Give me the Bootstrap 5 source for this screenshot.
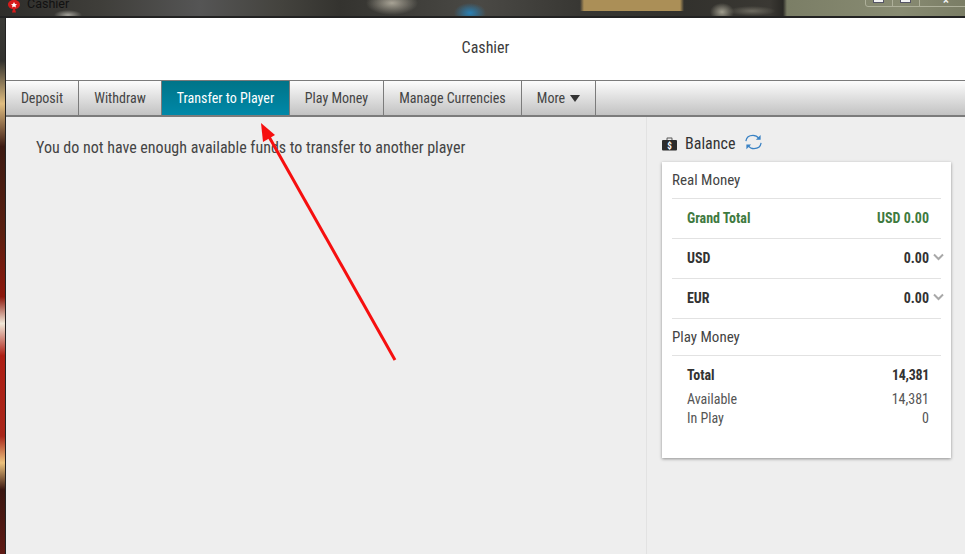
<!DOCTYPE html>
<html lang="en">
<head>
<meta charset="utf-8">
<title>Cashier</title>
<link href="https://cdn.jsdelivr.net/npm/bootstrap@5.3.0/dist/css/bootstrap.min.css" rel="stylesheet">
<style>
html,body{height:100%;}
body{width:965px;height:554px;overflow:hidden;position:relative;background:#eee;font-family:Roboto,"Liberation Sans",sans-serif;font-stretch:75%;color:#333;}
.titlebar{height:18px;flex:none;position:relative;overflow:hidden;border-bottom:2px solid;border-image:linear-gradient(#bdbdb0 50%,#222 50%) 1;background:
 radial-gradient(ellipse 14px 5px at 68px 15px,#a3a199,transparent),
 radial-gradient(ellipse 26px 12px at 392px 3px,#a8a395,transparent),
 radial-gradient(ellipse 16px 10px at 470px 13px,#2a80b4,transparent),
 radial-gradient(ellipse 12px 9px at 722px 12px,#a09d8e,transparent),
 radial-gradient(ellipse 24px 5px at 752px 11px,#6d6a60,transparent),
 linear-gradient(90deg,transparent 580px,#ab8f57 584px,#ab8f57 680px,transparent 684px) 0 0/100% 11px no-repeat,
 linear-gradient(90deg,#2e2d2a 0,#3f3e3a 100px,#555 200px,#44433e 280px,#34332f 340px,#4a4945 480px,#383733 580px,#32312d 684px,#3a3833 770px,#2a2925 783px,#7b7e66 787px,#888b72 900px,#7a7d65 965px);}
.wintitle{font-size:12.5px;line-height:14px;margin-top:-5px;color:#111;gap:6px;padding-left:7px;font-stretch:100%;}
.wintitle svg{margin-top:4px;}
.winbtns{position:absolute;left:865px;top:-6px;height:13px;width:110px;border:1px solid #aeb09a;border-radius:3px;}
.winbtns i{position:absolute;top:2px;width:11px;height:6px;background:#f4f4f4;border:1px solid #556;}
.winbtns i:nth-child(1){left:7px}.winbtns i:nth-child(2){left:34px}
.winbtns b{position:absolute;top:0;bottom:0;width:1px;background:#aeb09a;}
.winbtns b:nth-of-type(1){left:26px}.winbtns b:nth-of-type(2){left:53px}
.winbtns em{position:absolute;left:74px;top:0;width:12px;height:12px;font-style:normal;font-size:11px;line-height:12px;color:#f4f4f4;font-weight:700;text-align:center;font-stretch:100%;}
.sidestrip{width:6px;flex:none;border-right:1px solid #222;background:linear-gradient(#3a3a36 0,#33322e 8%,#e0bd80 16%,#3c1a12 24%,#5a1f10 40%,#8d170c 52%,#f1e8d8 57%,#ad1e14 63%,#a9261a 78%,#ecc27c 83%,#3a1610 88%,#5f1a14 100%);}
.headerzone{height:62px;flex:none;background:#fff;font-size:16px;color:#3c3c3c;padding-bottom:2px;}
.tabstrip{height:37px;flex:none;border-top:1px solid #7b7b7b;border-bottom:2px solid #7b7b7b;background:linear-gradient(#fcfcfc,#c2c2c2);}
.tabitem{display:flex;align-items:center;justify-content:center;height:100%;border-right:1px solid #7b7b7b;font-size:14px;color:#444;text-decoration:none;}
.tabitem.on{background:linear-gradient(#007488,#0088a8);color:#fff;}
.w1{width:73px}.w2{width:83px}.w3{width:128px}.w4{width:94px}.w5{width:138px}.w6{width:74px}
.caretdown{width:0;height:0;border-left:5.5px solid transparent;border-right:5.5px solid transparent;border-top:7px solid #333;margin-left:5px;}
.mainarea{background:#eee;min-height:0;}
.leftpane{width:640px;flex:none;padding:21px 0 0 30px;font-size:16px;line-height:20px;color:#444;}
.rightpane{width:319px;flex:none;border-left:1px solid #e2e2e2;padding:11px 14px 0 15px;}
.balhead{height:34px;padding-bottom:3px;font-size:16px;color:#333;gap:8px;}
.refreshicon{margin:0 0 4px 1px;}
.cardbox{background:#fff;box-shadow:0 1px 3px rgba(0,0,0,.4);padding:0 10px;height:296px;}
.secttl{font-size:15px;color:#444;}
.s1{height:37px;border-bottom:1px solid #e2e2e2;padding-top:8px;line-height:20px;}
.s2{height:37px;border-bottom:1px solid #e2e2e2;padding-top:8px;line-height:20px;}
.rowline{height:40px;border-bottom:1px solid #e2e2e2;padding:0 12px 0 15px;font-size:14px;font-weight:700;position:relative;color:#333;}
.rowline.gtot{color:#3f7a3f;}
.chev{position:absolute;right:-3px;top:14px;}
.minirow{padding:0 12px 0 15px;font-size:14px;color:#555;line-height:19px;}
.minirow.bold{font-weight:700;color:#333;padding-top:10px;margin-bottom:5px;}
.numtight{letter-spacing:-.3px;}
.redarrow{position:absolute;left:0;top:0;pointer-events:none;}
</style>
</head>
<body class="d-flex flex-column">
<div class="titlebar">
  <div class="wintitle d-flex align-items-center">
    <svg width="14" height="14" viewBox="0 0 14 14"><path d="M7 1C3.500 1 1 3 1 5.500S3.500 10 6 10L5 13.500H9L8 10C10.500 10 13 8 13 5.500S10.500 1 7 1Z" fill="#d61a1a"/><path d="M7 3l1 2 2 .2-1.500 1.400.4 2L7 7.600 5.100 8.600l.4-2L4 5.200 6 5z" fill="#fff"/></svg>
    <span>Cashier</span>
  </div>
  <div class="winbtns"><i></i><i></i><b></b><b></b><em>×</em></div>
</div>
<div class="d-flex flex-grow-1" style="min-height:0">
  <div class="sidestrip"></div>
  <div class="d-flex flex-column flex-grow-1" style="min-width:0">
    <div class="headerzone d-flex align-items-center justify-content-center">Cashier</div>
    <nav class="tabstrip d-flex">
      <a class="tabitem w1" href="#">Deposit</a>
      <a class="tabitem w2" href="#">Withdraw</a>
      <a class="tabitem w3 on" href="#">Transfer to Player</a>
      <a class="tabitem w4" href="#">Play Money</a>
      <a class="tabitem w5" href="#">Manage Currencies</a>
      <a class="tabitem w6" href="#">More<span class="caretdown"></span></a>
    </nav>
    <div class="mainarea d-flex flex-grow-1">
      <div class="leftpane">You do not have enough available funds to transfer to another player</div>
      <div class="rightpane">
        <div class="balhead d-flex align-items-center">
          <svg width="15" height="14" viewBox="0 0 15 14"><path d="M4.500 3V1.500C4.500 1 5 .5 5.500 .5H9.500C10 .5 10.500 1 10.500 1.500V3H9.500V1.500H5.500V3Z" fill="#555"/><rect x="0" y="3" width="15" height="10.500" rx="1" fill="#2b2b2b"/><text x="7.500" y="12" font-size="9" font-weight="700" fill="#fff" text-anchor="middle" font-family="Roboto,sans-serif">$</text></svg>
          <span>Balance</span>
          <svg class="refreshicon" width="19" height="18" viewBox="0 0 20 18" fill="none" stroke="#3a82c4" stroke-width="1.300"><path d="M2 8C2.500 4.500 5.500 2 9.500 2C12 2 14 3 15.500 5"/><path d="M18 10C17.500 13.500 14.500 16 10.500 16C8 16 6 15 4.500 13"/><path d="M17.500 1.500V6.500H12.500Z" fill="#3a82c4" stroke="none"/><path d="M2.500 16.500V11.500H7.500Z" fill="#3a82c4" stroke="none"/></svg>
        </div>
        <div class="cardbox">
          <div class="secttl s1">Real Money</div>
          <div class="rowline gtot d-flex align-items-center justify-content-between"><span>Grand Total</span><span>USD 0.00</span></div>
          <div class="rowline d-flex align-items-center justify-content-between"><span>USD</span><span>0.00</span>
            <svg class="chev" width="11" height="8" viewBox="0 0 11 8" fill="none" stroke="#a8a8a8" stroke-width="2"><path d="M1 1.500L5.500 6L10 1.500"/></svg></div>
          <div class="rowline d-flex align-items-center justify-content-between"><span>EUR</span><span>0.00</span>
            <svg class="chev" width="11" height="8" viewBox="0 0 11 8" fill="none" stroke="#a8a8a8" stroke-width="2"><path d="M1 1.500L5.500 6L10 1.500"/></svg></div>
          <div class="secttl s2">Play Money</div>
          <div class="minirow bold d-flex justify-content-between"><span>Total</span><span class="numtight">14,381</span></div>
          <div class="minirow d-flex justify-content-between"><span>Available</span><span>14,381</span></div>
          <div class="minirow d-flex justify-content-between"><span>In Play</span><span>0</span></div>
        </div>
      </div>
    </div>
  </div>
</div>
<svg class="redarrow" width="965" height="554" viewBox="0 0 965 554"><path d="M395 360L268 135" stroke="#f60f0f" stroke-width="3" fill="none"/><path d="M261 123L275 135L263 142Z" fill="#f60f0f"/></svg>
<script src="https://cdn.jsdelivr.net/npm/bootstrap@5.3.0/dist/js/bootstrap.bundle.min.js"></script>
</body>
</html>
